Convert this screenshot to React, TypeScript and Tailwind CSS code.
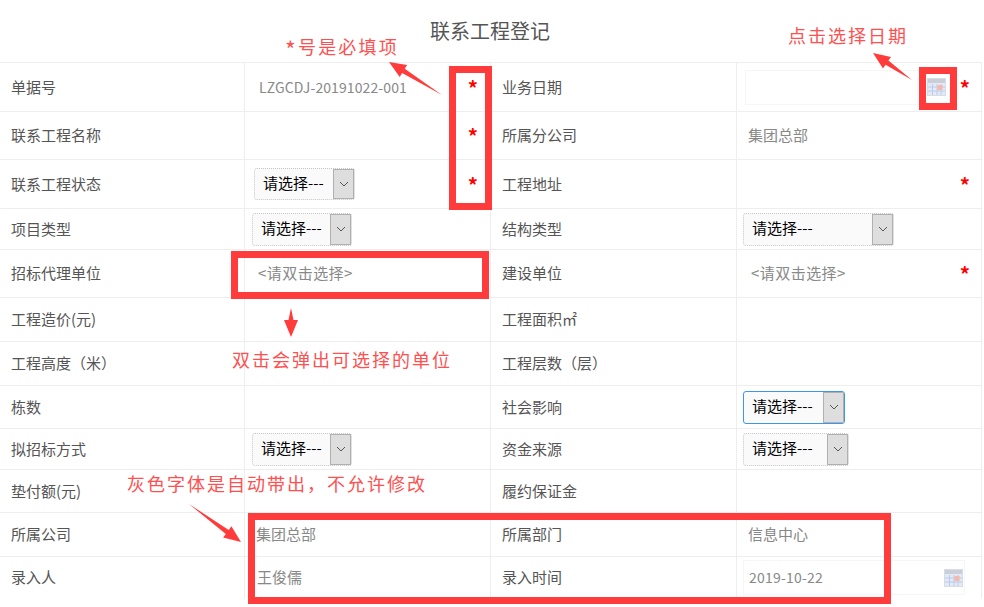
const font = { fontFamily: '"Noto Sans CJK SC", "Liberation Sans", sans-serif' }

function CalendarIcon() {
  return (
    <svg width="19" height="18" viewBox="0 0 19 18" className="shrink-0">
      <rect x="0.5" y="0.5" width="18" height="17" fill="#e3e9f5" stroke="#d8dce4" />
      <rect x="1" y="1" width="17" height="4" fill="#c9ced8" />
      <path d="M1 9h17M1 13h17M5.5 6v11M10 6v11M14 6v11" stroke="#bccce8" strokeWidth="1" />
      <rect x="10.5" y="7" width="5" height="5" fill="#f4b8ac" />
    </svg>
  )
}

function Star() {
  return <span className="mt-[1px] text-[20px] leading-none font-bold text-[#f00]">*</span>
}

function Select({ box, focus }: { box: string; focus?: boolean }) {
  return (
    <div
      className={`flex items-stretch rounded-[3px] bg-[#fafafa] text-[15px] text-black ${box} ${
        focus ? 'border border-[#3b95f5]' : 'border border-dotted border-[#c8c8c8]'
      }`}
    >
      <span className="-mt-[1px] flex-1 self-center pl-[8px] whitespace-nowrap">请选择---</span>
      <span className="flex w-[21px] shrink-0 items-center justify-center border border-[#b0b0b0] bg-[#dedede]">
        <svg width="10" height="6" viewBox="0 0 10 6" fill="none">
          <path d="M1 1l4 4 4-4" stroke="#555" strokeWidth="1" />
        </svg>
      </span>
    </div>
  )
}

function Gray({ children, className }: { children: React.ReactNode; className: string }) {
  return <span className={`whitespace-nowrap text-[15px] text-[#888] ${className}`}>{children}</span>
}

interface Row {
  h: string
  a: string
  b?: React.ReactNode
  c: string
  d?: React.ReactNode
}

const rows: Row[] = [
  {
    h: 'h-[49px]',
    a: '单据号',
    b: (
      <div className="flex w-full items-center justify-between pr-[12px]">
        <span className="pl-[14px] text-[14px] tracking-[0.1px] whitespace-nowrap text-[#888]">LZGCDJ-20191022-001</span>
        <Star />
      </div>
    ),
    c: '业务日期',
    d: (
      <div className="flex w-full items-center justify-between pr-[11px] pl-[8px]">
        <div className="flex h-[35px] w-[205px] items-center justify-end border border-[#f6f6f6] pr-[3px]">
          <CalendarIcon />
        </div>
        <Star />
      </div>
    ),
  },
  {
    h: 'h-[48px]',
    a: '联系工程名称',
    b: (
      <div className="flex w-full justify-end pr-[12px]">
        <Star />
      </div>
    ),
    c: '所属分公司',
    d: <Gray className="pl-[11px]">集团总部</Gray>,
  },
  {
    h: 'h-[49px]',
    a: '联系工程状态',
    b: (
      <div className="flex w-full items-center justify-between pr-[12px] pl-[9px]">
        <Select box="h-[32px] w-[101px]" />
        <Star />
      </div>
    ),
    c: '工程地址',
    d: (
      <div className="flex w-full justify-end pr-[11px]">
        <Star />
      </div>
    ),
  },
  {
    h: 'h-[41px]',
    a: '项目类型',
    b: (
      <div className="pl-[7px]">
        <Select box="h-[33px] w-[100px]" />
      </div>
    ),
    c: '结构类型',
    d: (
      <div className="pl-[6px]">
        <Select box="h-[33px] w-[151px]" />
      </div>
    ),
  },
  {
    h: 'h-[48px]',
    a: '招标代理单位',
    b: <Gray className="pl-[13px] tracking-[0.45px]">&lt;请双击选择&gt;</Gray>,
    c: '建设单位',
    d: (
      <div className="flex w-full items-center justify-between pr-[11px]">
        <Gray className="pl-[14px] tracking-[0.45px]">&lt;请双击选择&gt;</Gray>
        <Star />
      </div>
    ),
  },
  { h: 'h-[44px]', a: '工程造价(元)', c: '工程面积㎡' },
  { h: 'h-[44px]', a: '工程高度（米）', c: '工程层数（层）' },
  {
    h: 'h-[43px]',
    a: '栋数',
    c: '社会影响',
    d: (
      <div className="pl-[6px]">
        <Select box="h-[33px] w-[102px]" focus />
      </div>
    ),
  },
  {
    h: 'h-[41px]',
    a: '拟招标方式',
    b: (
      <div className="pl-[7px]">
        <Select box="h-[33px] w-[100px]" />
      </div>
    ),
    c: '资金来源',
    d: (
      <div className="pl-[6px]">
        <Select box="h-[33px] w-[106px]" />
      </div>
    ),
  },
  { h: 'h-[43px]', a: '垫付额(元)', c: '履约保证金' },
  {
    h: 'h-[44px]',
    a: '所属公司',
    b: <Gray className="pl-[11px]">集团总部</Gray>,
    c: '所属部门',
    d: <Gray className="pl-[11px]">信息中心</Gray>,
  },
  {
    h: 'h-[41px]',
    a: '录入人',
    b: <Gray className="pl-[12px]">王俊儒</Gray>,
    c: '录入时间',
    d: (
      <div className="pl-[6px]">
        <div className="flex h-[35px] w-[222px] items-center justify-between border border-[#f6f6f6] pr-[1px] pl-[5px]">
          <span className="text-[14px] tracking-[0.2px] text-[#888]">2019-10-22</span>
          <CalendarIcon />
        </div>
      </div>
    ),
  },
]

function Arrow({ x1, y1, x2, y2 }: { x1: number; y1: number; x2: number; y2: number }) {
  // tapered arrow drawn from tail (x1,y1) to tip (x2,y2)
  const len = Math.hypot(x2 - x1, y2 - y1)
  const ux = (x2 - x1) / len
  const uy = (y2 - y1) / len
  const nx = -uy
  const ny = ux
  const bx = x2 - ux * 17
  const by = y2 - uy * 17
  const pts = [
    [x1, y1],
    [bx + nx * 2.5, by + ny * 2.5],
    [bx + nx * 7, by + ny * 7],
    [x2, y2],
    [bx - nx * 7, by - ny * 7],
    [bx - nx * 2.5, by - ny * 2.5],
  ]
  return <polygon points={pts.map((p) => p.join(',')).join(' ')} fill="#ff3b3b" />
}

export default function App() {
  return (
    <div className="relative h-[607px] w-[984px] overflow-hidden bg-white text-[#555]" style={font}>
      <div className="w-[982px]">
        <div className="flex h-[63px] items-center justify-center border-b border-[#eeeeee] pr-[2px] text-[20px]">
          联系工程登记
        </div>
        {rows.map((r, i) => (
          <div
            key={r.a}
            className={`grid grid-cols-[245px_246px_246px_245px] text-[15px] ${r.h} ${
              i < rows.length - 1 ? 'border-b border-[#eeeeee]' : ''
            }`}
          >
            <div className="flex items-center border-r border-[#eeeeee] pl-[11px]">{r.a}</div>
            <div className="flex items-center border-r border-[#eeeeee]">{r.b}</div>
            <div className="flex items-center border-r border-[#eeeeee] pl-[11px]">{r.c}</div>
            <div className="flex items-center border-r border-[#eeeeee]">{r.d}</div>
          </div>
        ))}
      </div>

      {/* annotations drawn over the form */}
      <div className="absolute top-[66px] left-[449px] h-[144px] w-[43px] border-[7px] border-[#ff3b3b]" />
      <div className="absolute top-[67px] left-[919px] h-[43px] w-[38px] border-[7px] border-[#ff3b3b]" />
      <div className="absolute top-[251px] left-[231px] h-[48px] w-[258px] border-[7px] border-[#ff3b3b]" />
      <div className="absolute top-[513px] left-[248px] h-[91px] w-[643px] border-[7px] border-[#ff3b3b]" />

      <svg className="absolute top-0 left-0" width="984" height="607">
        <Arrow x1={442} y1={95} x2={389} y2={62} />
        <Arrow x1={912} y1={80} x2={873} y2={53} />
        <Arrow x1={291} y1={308} x2={291} y2={337} />
        <Arrow x1={189} y1={504} x2={241} y2={542} />
      </svg>

      <div className="absolute top-[33px] left-[285px] text-[18px] leading-[26px] tracking-[2.2px] whitespace-nowrap text-[#ff5050]">
        <span className="align-[-5px] text-[23px] leading-none">*</span>号是必填项
      </div>
      <div className="absolute top-[22px] left-[788px] text-[18px] leading-[26px] tracking-[2px] whitespace-nowrap text-[#ff4f4f]">
        点击选择日期
      </div>
      <div className="absolute top-[346px] left-[232px] text-[18px] leading-[26px] tracking-[2px] whitespace-nowrap text-[#ff4f4f]">
        双击会弹出可选择的单位
      </div>
      <div className="absolute top-[470px] left-[127px] text-[18px] leading-[26px] tracking-[2px] whitespace-nowrap text-[#ff4f4f]">
        灰色字体是自动带出，不允许修改
      </div>
    </div>
  )
}
